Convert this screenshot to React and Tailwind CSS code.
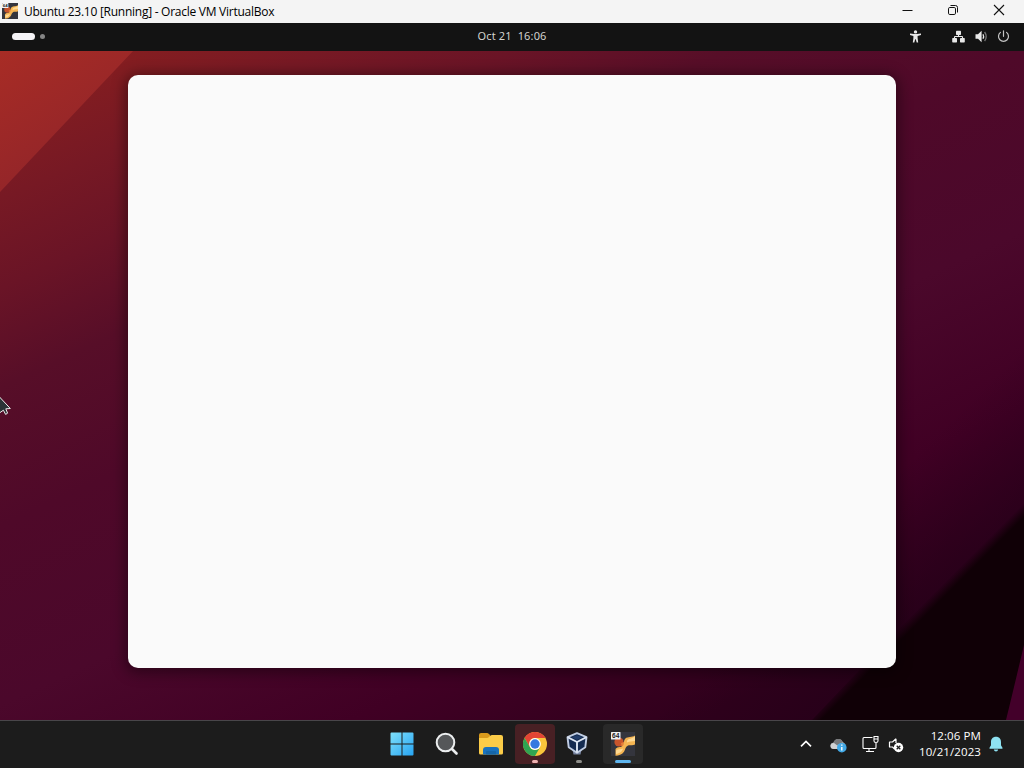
function VmGlyph({ className }) {
  return (
    <svg className={className} viewBox="0 0 24 24">
      <rect x="0" y="0" width="24" height="24" fill="#34353d" />
      <circle cx="8" cy="10" r="4.6" fill="#c9552c" />
      <path d="M10 11L14.5 9.5L15.5 14L11 16.5Z" fill="#e5803a" />
      <path d="M24 3.5V12.5C21 14 19 12.5 17 13.5C14 15 14.5 18 12.8 20C11 22.5 7.5 23.8 4.5 23.8V17C6.5 14.2 9 15.4 11 14.4C14 13 12 8.5 14.4 6.4C16.8 4.4 21 5.6 24 3.5Z" fill="#f5b552" />
      <path d="M24 4.5V9C21 9.5 18.5 9 16 10.5C15.5 8 17.5 7 20 6.5ZM5 18.5C7.5 16.5 10 17.5 12 16.5C11.5 19.5 8.5 21.5 5 22Z" fill="#ffd992" />
      <rect x="0" y="0" width="9.5" height="7.6" rx="0.6" fill="#f1f1f1" />
      <text x="4.75" y="6.2" textAnchor="middle" fontSize="6.6" fontWeight="700" fontFamily="Liberation Sans, sans-serif" fill="#222">64</text>
    </svg>
  );
}

function TitleBar() {
  return (
    <header className="flex h-[23px] shrink-0 items-center bg-[#f4f4f4] pb-px pl-[2px] pr-[19px] text-black">
      <VmGlyph className="h-4 w-4" />
      <span className="ml-[6px] whitespace-nowrap pt-px font-['Open_Sans','Noto_Sans',sans-serif] text-[12px] leading-[21px] tracking-[-0.26px]">
        Ubuntu 23.10 [Running] - Oracle VM VirtualBox
      </span>
      <div className="ml-auto flex items-center pb-[2px]">
        <svg className="mr-[33px] h-3 w-3" viewBox="0 0 12 12" fill="none" stroke="#111">
          <path d="M0.5 6.5H10.5" />
        </svg>
        <svg className="mr-[34px] h-3 w-3" viewBox="0 0 12 12" fill="none" stroke="#111">
          <rect x="1.5" y="3.5" width="7" height="7" rx="1.3" />
          <path d="M3.5 1.5H8.5Q10.5 1.5 10.5 3.5V8.5" />
        </svg>
        <svg className="h-3 w-3" viewBox="0 0 12 12" fill="none" stroke="#111" strokeWidth="1.1">
          <path d="M1 1L11 11M11 1L1 11" />
        </svg>
      </div>
    </header>
  );
}

function GnomeBar() {
  return (
    <div className="grid h-7 shrink-0 grid-cols-[1fr_auto_1fr] items-center bg-[#131313] pb-px pl-3 pr-[14px]">
      <div className="flex items-center gap-[5px]">
        <span className="h-[7px] w-[23px] rounded-full bg-[#f5f3f6]" />
        <span className="h-[5px] w-[5px] rounded-full bg-[#858585]" />
      </div>
      <div className="ml-[2px] flex gap-[6px] whitespace-nowrap pb-px font-['Noto_Sans','Open_Sans',sans-serif] text-[11px] leading-4 tracking-[0.15px] text-[#d2d2ce]">
        <span>Oct 21</span>
        <span>16:06</span>
      </div>
      <div className="flex items-center justify-end text-[#e8e8e8]">
        <svg className="mr-[30px] h-[13px] w-[13px]" viewBox="0 0 13 13" fill="currentColor">
          <circle cx="6.5" cy="1.9" r="1.7" />
          <path d="M1 3.6L5 4.1H8L12 3.6V5.1L8.6 5.9V8L9.2 12.6H7.7L6.8 9.2H6.2L5.3 12.6H3.8L4.4 8V5.9L1 5.1Z" />
        </svg>
        <svg className="mr-[10px] h-[13px] w-[13px]" viewBox="0 0 13 13" fill="currentColor">
          <rect x="4" y="0.8" width="5" height="4.2" rx="0.7" />
          <rect x="0.2" y="8" width="4.8" height="4.4" rx="0.7" />
          <rect x="8" y="8" width="4.8" height="4.4" rx="0.7" />
          <path d="M2.5 9V7Q2.5 6.5 3 6.5H10Q10.5 6.5 10.5 7V9M6.5 4V7" fill="none" stroke="currentColor" strokeWidth="1.1" />
        </svg>
        <svg className="mr-[9px] h-[13px] w-[13px]" viewBox="0 0 13 13">
          <path d="M0.5 4.2H3L6.6 0.8V12.2L3 8.8H0.5Z" fill="currentColor" />
          <path d="M8 4.2Q9.2 6.5 8 8.8" fill="none" stroke="currentColor" strokeWidth="1.3" />
          <path d="M9.6 2Q12.8 6.5 9.6 11" fill="none" stroke="#777" strokeWidth="1.3" />
        </svg>
        <svg className="h-[13px] w-[13px]" viewBox="0 0 13 13" fill="none" stroke="#c4c4c4" strokeWidth="1.2" strokeLinecap="round">
          <path d="M6.5 0.8V6.3M3.4 2.4A5 5 0 1 0 9.6 2.4" />
        </svg>
      </div>
    </div>
  );
}

function Wallpaper() {
  return (
    <svg className="absolute inset-0 h-full w-full" viewBox="0 0 1024 669" preserveAspectRatio="none">
      <defs>
        <linearGradient id="base" gradientUnits="userSpaceOnUse" x1="0" y1="0" x2="378" y2="815">
          <stop offset="0.05" stopColor="#861e20" />
          <stop offset="0.15" stopColor="#771924" />
          <stop offset="0.24" stopColor="#6a1426" />
          <stop offset="0.34" stopColor="#570e28" />
          <stop offset="0.48" stopColor="#4f0929" />
          <stop offset="0.66" stopColor="#4b082b" />
          <stop offset="0.84" stopColor="#400024" />
          <stop offset="1" stopColor="#30001c" />
        </linearGradient>
        <linearGradient id="corner" gradientUnits="userSpaceOnUse" x1="0" y1="0" x2="70" y2="110">
          <stop offset="0" stopColor="#a82c25" />
          <stop offset="1" stopColor="#932529" />
        </linearGradient>
        <linearGradient id="band" gradientUnits="userSpaceOnUse" x1="918" y1="558" x2="925" y2="565">
          <stop offset="0" stopColor="#100006" stopOpacity="0" />
          <stop offset="1" stopColor="#100006" />
        </linearGradient>
        <linearGradient id="fade" gradientUnits="userSpaceOnUse" x1="840" y1="480" x2="917" y2="557">
          <stop offset="0" stopColor="#1d0016" stopOpacity="0" />
          <stop offset="1" stopColor="#1d0016" stopOpacity="0.4" />
        </linearGradient>
      </defs>
      <rect width="1024" height="669" fill="url(#base)" />
      <path d="M0 0H133L0 141Z" fill="url(#corner)" />
      <path d="M1024 296V669H651Z" fill="url(#fade)" />
      <path d="M1024 450V669H812L900 576Z" fill="url(#band)" />
      <path d="M1024 594V669H1006Q1014 636 1024 594Z" fill="#43002a" />
    </svg>
  );
}

function Desktop() {
  return (
    <main className="relative flex h-[669px] shrink-0 justify-center overflow-hidden pt-[24px]">
      <Wallpaper />
      <section className="relative h-[593px] w-[768px] rounded-[10px] bg-[#fafafa] shadow-[0_2px_14px_3px_rgba(0,0,0,0.4)]" />
      <svg className="absolute left-0 top-[345px] h-5 w-3" viewBox="0 0 12 20">
        <path d="M-7 -6L10.3 12.5L5.8 12.8L7.6 17.2L5.6 18.4L3.4 14.2L-2 18Z" fill="#2c3336" stroke="#eee" strokeWidth="1" />
      </svg>
    </main>
  );
}

function Start() {
  return (
    <svg className="h-6 w-6" viewBox="0 0 24 24">
      <defs>
        <linearGradient id="win" x1="0" y1="0" x2="1" y2="1">
          <stop offset="0" stopColor="#7fe0fb" />
          <stop offset="1" stopColor="#27a4f3" />
        </linearGradient>
      </defs>
      <path d="M1.5 0.5H11.5V11.5H0.5V1.5Q0.5 0.5 1.5 0.5ZM12.5 0.5H22.5Q23.5 0.5 23.5 1.5V11.5H12.5ZM0.5 12.5H11.5V23.5H1.5Q0.5 23.5 0.5 22.5ZM12.5 12.5H23.5V22.5Q23.5 23.5 22.5 23.5H12.5Z" fill="url(#win)" />
    </svg>
  );
}

function Search() {
  return (
    <svg className="h-6 w-6" viewBox="0 0 24 24">
      <circle cx="10.5" cy="10.5" r="8.8" fill="#555759" stroke="#eceeef" strokeWidth="2" />
      <path d="M17 17L21.5 21.5" stroke="#eceeef" strokeWidth="2.6" strokeLinecap="round" />
    </svg>
  );
}

function Folder() {
  return (
    <svg className="h-6 w-6" viewBox="0 0 24 24">
      <path d="M0 3Q0 1 2 1H8Q9 1 10 2L11 3V9H0Z" fill="#d99a1c" />
      <path d="M0 6H8Q9 6 10 5L11 4Q12 3 13 3H22Q24 3 24 5V21Q24 22.5 22.5 22.5H1.5Q0 22.5 0 21Z" fill="#fbcc48" />
      <path d="M4 22.5V18Q4 15 7 15H17Q20 15 20 18V22.5Z" fill="#1972bd" />
      <path d="M7 22.5V20Q7 19 8 19H16Q17 19 17 20V22.5Z" fill="#1566a8" />
    </svg>
  );
}

function Chrome() {
  return (
    <svg className="h-6 w-6" viewBox="0 0 24 24">
      <circle cx="12" cy="12" r="12" fill="#fac63b" />
      <path d="M1.6 6A12 12 0 0 1 22.4 6H12A6 6 0 0 0 6.8 9L6.8 15Z" fill="#e34435" />
      <path d="M1.6 6A12 12 0 0 0 12 24L17.2 15A6 6 0 0 1 6.8 15Z" fill="#30a552" />
      <circle cx="12" cy="12" r="5.9" fill="#fff" />
      <circle cx="12" cy="12" r="4.7" fill="#3478e0" />
    </svg>
  );
}

function Cube() {
  return (
    <svg className="h-6 w-6" viewBox="0 0 24 24" strokeLinejoin="round">
      <path d="M7.5 18L8.5 22.5H15.5L16.5 18Z" fill="#77839f" />
      <path d="M12 1.2L21.5 5.2L20.3 15.2L12 20.8L3.7 15.2L2.5 5.2Z" fill="#142b50" stroke="#bfcce2" strokeWidth="1.9" />
      <path d="M2.5 5.2L12 10L21.5 5.2M12 10V20.8" fill="none" stroke="#dce5f2" strokeWidth="1.9" />
      <path d="M6.8 5.3L12 3.2L17.2 5.3L12 7.7Z" fill="#233f6c" />
    </svg>
  );
}

function AppButton({ children, tone = "", indicator = "" }) {
  return (
    <div className={`flex h-10 w-10 flex-col items-center rounded-[4px] pt-[8px] ${tone}`}>
      {children}
      <span className={`mt-[4px] h-[3px] rounded-full ${indicator}`} />
    </div>
  );
}

function Tray() {
  return (
    <div className="flex items-center text-white">
      <svg className="mr-[18px] h-3 w-3" viewBox="0 0 12 12" fill="none" stroke="currentColor" strokeWidth="1.6">
        <path d="M1 8.4L6 3.4L11 8.4" />
      </svg>
      <svg className="mr-[15px] mt-[2px] h-4 w-[17px]" viewBox="0 0 17 16">
        <path d="M4 12Q0.5 12 0.5 8.8Q0.5 6 3.4 5.8Q4.5 2 8.3 2Q11.6 2 12.7 5Q15.5 6 15.3 9Q15 12 12 12Z" fill="#a7a9aa" />
        <path d="M3.4 5.8Q4.5 2 8.3 2Q11.6 2 12.7 5L6 9Z" fill="#77797b" />
        <path d="M4 12Q0.5 12 0.5 8.8Q1 6 4 6L12 12Z" fill="#d0d2d3" />
        <circle cx="11.8" cy="10.7" r="4.8" fill="#42a9e6" />
        <path d="M11.8 9.9V13.4M11.8 7.5V8.8" stroke="#fff" strokeWidth="1.4" />
      </svg>
      <svg className="mr-[9px] h-[18px] w-[17px]" viewBox="0 0 17 18" fill="none" stroke="currentColor" strokeWidth="1.1">
        <path d="M10.5 2.5H2Q1 2.5 1 3.5V12.5Q1 13.5 2 13.5H13Q14 13.5 14 12.5V8M4 16.5H12M7 13.5V16.5" />
        <path d="M12 1.5H16V6Q16 7.5 14 7.5Q12 7.5 12 6ZM12 4H16" />
      </svg>
      <svg className="mr-[15px] mt-[2px] h-4 w-4" viewBox="0 0 16 16">
        <path d="M8 1.8L4.5 5H1.5V10H4.5L6.5 12M8 1.8V6" fill="none" stroke="currentColor" strokeWidth="1.2" strokeLinejoin="round" />
        <circle cx="10.5" cy="10.5" r="4.7" fill="currentColor" />
        <path d="M8.7 8.7L12.3 12.3M12.3 8.7L8.7 12.3" stroke="#1c1c1c" strokeWidth="1.3" />
      </svg>
      <div className="w-[62px] whitespace-nowrap text-right font-['Open_Sans','Noto_Sans',sans-serif] text-[11.5px] leading-4">
        <div className="tracking-[0.1px]">12:06 PM</div>
        <div className="tracking-[0.1px]">10/21/2023</div>
      </div>
      <svg className="ml-[7px] h-4 w-4" viewBox="0 0 16 16" fill="#8ee2f2">
        <path d="M8 0.8C11.2 0.8 13 3 13 6V9.3L14.6 12Q14.8 12.8 14 12.8H2Q1.2 12.8 1.4 12L3 9.3V6C3 3 4.8 0.8 8 0.8ZM5.8 13.6H10.2Q9.8 15.5 8 15.5Q6.2 15.5 5.8 13.6Z" />
      </svg>
    </div>
  );
}

function Taskbar() {
  return (
    <footer className="grid h-12 grid-cols-[383px_1fr_auto] items-center border-t border-[#49464a] bg-[#1c1c1c] pb-[2px] pr-[20px]">
      <span />
      <nav className="flex items-center gap-1">
        <AppButton tone="-ml-px">
          <Start />
        </AppButton>
        <AppButton tone="ml-[1px]">
          <Search />
        </AppButton>
        <AppButton>
          <Folder />
        </AppButton>
        <AppButton tone="bg-[#482024]" indicator="w-[6px] bg-[#efb3b3]">
          <Chrome />
        </AppButton>
        <AppButton tone="-ml-[2px]" indicator="ml-[3px] w-[6px] bg-[#8f8f8b]">
          <Cube />
        </AppButton>
        <AppButton tone="ml-[2px] bg-[#292929]" indicator="w-[16px] bg-[#5eb5ee]">
          <VmGlyph className="h-6 w-6" />
        </AppButton>
      </nav>
      <Tray />
    </footer>
  );
}

export default function App() {
  return (
    <div className="flex h-[768px] w-[1024px] flex-col overflow-hidden bg-[#1c1c1c]">
      <TitleBar />
      <GnomeBar />
      <Desktop />
      <Taskbar />
    </div>
  );
}
